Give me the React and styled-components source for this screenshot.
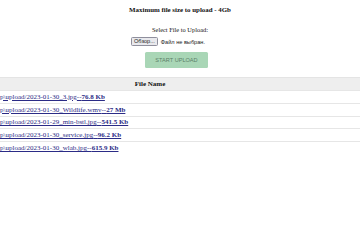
import styled, { createGlobalStyle } from "styled-components";

// Страница загрузки файлов: заголовок, выбор файла, кнопка и таблица загруженного

const files = [
  { name: "C:\\temp\\upload/2023-01-30_3.jpg", size: "76.8 Kb" },
  { name: "C:\\temp\\upload/2023-01-30_Wildlife.wmv", size: "27 Mb" },
  { name: "C:\\temp\\upload/2023-01-29_min-bstl.jpg", size: "541.5 Kb" },
  { name: "C:\\temp\\upload/2023-01-30_service.jpg", size: "96.2 Kb" },
  { name: "C:\\temp\\upload/2023-01-30_wlab.jpg", size: "615.9 Kb" },
];

const GlobalStyle = createGlobalStyle`
  html, body {
    margin: 0;
    padding: 0;
    background: #ffffff;
    overflow: hidden;
  }
  body {
    font-family: "Liberation Serif", "Times New Roman", serif;
    font-size: 6.4px;
    color: #111111;
  }
`;

export default function App() {
  return (
    <>
      <GlobalStyle />
      <Page>
        <Title>Maximum file size to upload - 4Gb</Title>
        <UploadForm>
          <Label>Select File to Upload:</Label>
          <FileRow>
            <BrowseButton type="button">Обзор...</BrowseButton>
            <FileStatus>Файл не выбран.</FileStatus>
          </FileRow>
          <StartButton type="button">START UPLOAD</StartButton>
        </UploadForm>
        <Table>
          <thead>
            <tr>
              <HeadCell>File Name</HeadCell>
            </tr>
          </thead>
          <tbody>
            {files.map((f) => (
              <tr key={f.name}>
                <Cell>
                  <FileLink href="#">
                    {f.name}--<b>{f.size}</b>
                  </FileLink>
                </Cell>
              </tr>
            ))}
          </tbody>
        </Table>
      </Page>
    </>
  );
}

const Page = styled.div`
  width: 360px;
  height: 240px;
  overflow: hidden;
  display: flex;
  flex-direction: column;
  align-items: center;
`;

const Title = styled.h3`
  margin: 6px 0 0;
  font-size: 6.9px;
  line-height: 8px;
  font-weight: bold;
`;

const UploadForm = styled.div`
  display: flex;
  flex-direction: column;
  align-items: center;
  margin-top: 12px;
`;

const Label = styled.div`
  line-height: 8px;
`;

const FileRow = styled.div`
  width: 98px;
  display: flex;
  align-items: center;
  gap: 3px;
  margin-top: 3px;
  font-family: "Liberation Sans", Arial, sans-serif;
  font-size: 5.6px;
`;

const BrowseButton = styled.button`
  height: 9px;
  padding: 0 2px;
  font-family: inherit;
  font-size: 5.6px;
  line-height: 7px;
  color: #222222;
  background: #e9e9ed;
  border: 1px solid #8f8f9d;
  border-radius: 1.5px;
`;

const FileStatus = styled.span`
  color: #222222;
`;

const StartButton = styled.button`
  width: 63px;
  height: 16px;
  margin: 6px 7px 0 0;
  padding: 0;
  font-family: "Liberation Sans", Arial, sans-serif;
  font-size: 5.6px;
  color: #5c7f68;
  background: #a9d6b6;
  border: none;
  border-radius: 1.5px;
`;

const Table = styled.table`
  align-self: flex-start;
  width: 420px;
  margin-left: -60px;
  margin-top: 9px;
  border-collapse: collapse;
  font-size: 7px;
`;

const HeadCell = styled.th`
  height: 12px;
  padding: 0;
  background: #eeeeee;
  border-top: 1px solid #e4e4e4;
  font-weight: bold;
  text-align: center;
`;

const Cell = styled.td`
  height: 11.8px;
  padding: 0 0 0 41px;
  border-top: 1px solid #e6e6e6;
  text-align: left;
  white-space: nowrap;
`;

const FileLink = styled.a`
  color: #2b2b86;
  text-decoration: underline;
`;
